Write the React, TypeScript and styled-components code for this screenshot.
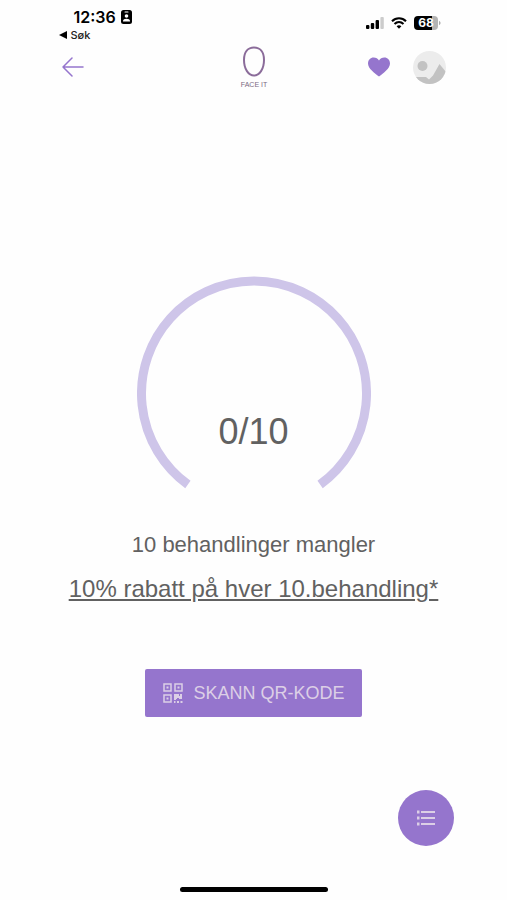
import React from "react";
import styled, { createGlobalStyle } from "styled-components";

const purple = "#9575cd";
const grey = "#616161";

const GlobalStyle = createGlobalStyle`
  *, *::before, *::after { box-sizing: border-box; }
  body { margin: 0; background: #fefefe; font-family: "Liberation Sans", Arial, sans-serif; }
`;

const Screen = styled.div`
  display: flex;
  flex-direction: column;
  width: 100%;
  max-width: 414px;
  min-height: 100vh;
  margin: 0 auto;
`;

const StatusBar = styled.div`
  display: flex;
  justify-content: space-between;
  padding: 8px 20px 0 12px;
  color: #000;
  font-family: Inter, sans-serif;
`;

const Clock = styled.div`
  display: flex;
  align-items: center;
  gap: 5px;
  height: 18px;
  padding-left: 15px;
  font-size: 16px;
  font-weight: 600;
`;

const BackToApp = styled.button`
  display: flex;
  align-items: center;
  gap: 4px;
  height: 18px;
  padding: 0;
  border: 0;
  background: none;
  color: #222;
  font: 500 11px/18px Inter, sans-serif;
`;

const Indicators = styled.div`
  display: flex;
  align-items: center;
  gap: 7px;
  height: 30px;
`;

const Header = styled.header`
  display: grid;
  grid-template-columns: 1fr auto 1fr;
  align-items: center;
  height: 46px;
  padding: 0 15px;
`;

const HeaderActions = styled.div`
  display: flex;
  align-items: center;
  justify-content: flex-end;
  gap: 22px;
`;

const IconButton = styled.button`
  display: flex;
  justify-self: start;
  padding: 0;
  border: 0;
  background: none;
  color: ${purple};
`;

const Main = styled.main`
  display: flex;
  flex: 1;
  flex-direction: column;
  align-items: center;
  padding-top: 186px;
`;

const GaugeBox = styled.div`
  display: grid;
  justify-items: center;
  align-items: end;
  width: 234px;
  height: 214px;

  > * { grid-area: 1 / 1; }
`;

const Count = styled.div`
  margin-bottom: 38px;
  color: ${grey};
  font-size: 36px;
  line-height: 40px;
`;

const Remaining = styled.p`
  margin: 41px 0 0;
  color: ${grey};
  font-size: 22px;
  line-height: 28px;
`;

const Offer = styled.a`
  margin-top: 16px;
  color: ${grey};
  font-size: 24px;
  line-height: 28px;
  text-decoration: underline;
`;

const ScanButton = styled.button`
  display: flex;
  align-items: center;
  justify-content: center;
  gap: 10px;
  height: 48px;
  margin-top: 66px;
  padding: 0 17px 0 18px;
  border: 0;
  border-radius: 2px;
  background: ${purple};
  color: #dccfe6;
  font: 18px/24px "Liberation Sans", Arial, sans-serif;
  text-transform: uppercase;
`;

const Footer = styled.footer`
  display: flex;
  flex-direction: column;
  align-items: center;
  gap: 41px;
  padding: 0 7px 8px;
`;

const ListButton = styled.button`
  display: flex;
  align-items: center;
  justify-content: center;
  align-self: flex-end;
  width: 56px;
  height: 56px;
  padding: 0;
  border: 0;
  border-radius: 50%;
  background: ${purple};
  color: #dccfe6;
`;

const HomeIndicator = styled.div`
  width: 148px;
  height: 5px;
  border-radius: 3px;
  background: #000;
`;

const IdIcon = () => (
  <svg width="11" height="14" viewBox="0 0 11 14" aria-hidden="true">
    <rect width="11" height="14" rx="2.5" fill="#000" />
    <rect x="3.5" y="1.5" width="4" height="1" rx=".5" fill="#fff" />
    <circle cx="5.5" cy="6" r="1.8" fill="#fff" />
    <path d="M2 11.5V11c0-3 7-3 7 0v.5z" fill="#fff" />
  </svg>
);

const SignalIcon = () => (
  <svg width="18" height="12" viewBox="0 0 18 12" aria-label="Signal" role="img">
    <rect y="8" width="3.4" height="4" rx="1" />
    <rect x="4.8" y="6" width="3.4" height="6" rx="1" />
    <rect x="9.6" y="3" width="3.4" height="9" rx="1" />
    <rect x="14.4" width="3.4" height="12" rx="1" fill="#ccc" />
  </svg>
);

const WifiIcon = () => (
  <svg width="16" height="12" viewBox="0 0 16 12" aria-label="Wi-Fi" role="img">
    <path d="M1 4.2c4-3.9 10-3.9 14 0M3.5 7c2.6-2.5 6.4-2.5 9 0" fill="none" stroke="#000" strokeWidth="2.1" />
    <path d="M5.6 9.2c1.5-1.2 3.3-1.2 4.8 0L8 11.7z" />
  </svg>
);

const BatteryIcon = () => (
  <svg width="27" height="14" viewBox="0 0 27 14" aria-label="Battery" role="img">
    <path d="M4 0h14v14H4a4 4 0 0 1-4-4V4a4 4 0 0 1 4-4z" />
    <path d="M18 0h2a4 4 0 0 1 4 4v6a4 4 0 0 1-4 4h-2z" fill="#b4b4b4" />
    <path d="M25 5c2 .6 2 3.4 0 4z" fill="#aaa" />
    <text x="12" y="11" fill="#fff" fontFamily="Inter, sans-serif" fontSize="12" fontWeight="700" textAnchor="middle">68</text>
  </svg>
);

const ArrowIcon = () => (
  <svg width="22" height="20" viewBox="0 0 22 20" fill="none" stroke="currentColor" strokeWidth="1.5" strokeLinecap="round" strokeLinejoin="round" aria-hidden="true">
    <path d="M21 10H1M10 1L1 10l9 9" />
  </svg>
);

const Logo = () => (
  <svg width="30" height="42" viewBox="0 0 30 42" role="img" aria-label="Face It">
    <path d="M15 1.5C9 1.5 5 6 5 14c0 9 4.5 15.500 10 15.500S25 23 25 14C25 6 21 1.500 15 1.500z" fill="none" stroke="#8b6c9a" strokeWidth="2" />
    <text x="15" y="41" fill="#7b6982" fontFamily="'Liberation Sans Narrow', 'Liberation Sans', sans-serif" fontSize="7" textAnchor="middle">FACE IT</text>
  </svg>
);

const HeartIcon = () => (
  <svg width="24" height="20" viewBox="0 0 24 20" fill="currentColor" aria-hidden="true">
    <path d="M12 19.5C7.5 16 1 11.5 1 6.5 1 3 3.5.5 6.600.5 9 .5 11 1.8 12 3.5 13 1.8 15 .5 17.400.5 20.500.5 23 3 23 6.500c0 5-6.500 9.500-11 13z" />
  </svg>
);

const AvatarIcon = () => (
  <svg width="33" height="33" viewBox="0 0 33 33" aria-hidden="true">
    <defs>
      <clipPath id="avatar"><circle cx="16.5" cy="16.5" r="16.5" /></clipPath>
    </defs>
    <g clipPath="url(#avatar)">
      <rect width="33" height="33" fill="#ececec" />
      <circle cx="9.5" cy="15" r="5" fill="#c2c2c2" />
      <path d="M0 26h13l3 2.500 4-4L26.500 13 33 21v12H0z" fill="#c2c2c2" />
    </g>
  </svg>
);

const Gauge = () => (
  <svg width="234" height="214" viewBox="0 0 234 214" fill="none" aria-hidden="true">
    <path d="M50.9 208.5A112.5 112.5 0 1 1 183.1 208.5" stroke="#cec5e9" strokeWidth="9" />
  </svg>
);

const QrIcon = () => (
  <svg width="20" height="20" viewBox="0 0 20 20" fill="none" stroke="currentColor" strokeWidth="1.5" aria-hidden="true">
    <path d="M1 1h7v7H1zM12 1h7v7h-7zM1 12h7v7H1z" />
    <path d="M3.5 3.5h2v2h-2zM14.5 3.5h2v2h-2zM3.5 14.5h2v2h-2z" fill="currentColor" stroke="none" />
    <path d="M11 11h5v2h1v-2h2v5h-3v-1h-2v1h-1v1h-2zM14 18h2v2h-2zM17.5 18h2v2h-2zM11 18h1.500v2H11z" fill="currentColor" stroke="none" />
  </svg>
);

const ListIcon = () => (
  <svg width="20" height="16" viewBox="0 0 20 16" fill="currentColor" aria-hidden="true">
    {[1, 7, 13].map((y) => (
      <g key={y}>
        <rect x="1" y={y - 0.5} width="2.5" height="3" />
        <rect x="5" y={y} width="14" height="2" />
      </g>
    ))}
  </svg>
);

export default function App() {
  return (
    <>
      <GlobalStyle />
      <Screen>
        <StatusBar>
          <div>
            <Clock>12:36 <IdIcon /></Clock>
            <BackToApp>
              <svg width="8" height="8" viewBox="0 0 8 8" aria-hidden="true"><path d="M8 0v8L0 4z" /></svg>
              Søk
            </BackToApp>
          </div>
          <Indicators><SignalIcon /><WifiIcon /><BatteryIcon /></Indicators>
        </StatusBar>
        <Header>
          <IconButton aria-label="Tilbake"><ArrowIcon /></IconButton>
          <Logo />
          <HeaderActions>
            <IconButton aria-label="Favoritt"><HeartIcon /></IconButton>
            <IconButton aria-label="Profil"><AvatarIcon /></IconButton>
          </HeaderActions>
        </Header>
        <Main>
          <GaugeBox><Gauge /><Count>0/10</Count></GaugeBox>
          <Remaining>10 behandlinger mangler</Remaining>
          <Offer href="#vilkar">10% rabatt på hver 10.behandling*</Offer>
          <ScanButton><QrIcon />Skann QR-kode</ScanButton>
        </Main>
        <Footer>
          <ListButton aria-label="Liste"><ListIcon /></ListButton>
          <HomeIndicator />
        </Footer>
      </Screen>
    </>
  );
}
